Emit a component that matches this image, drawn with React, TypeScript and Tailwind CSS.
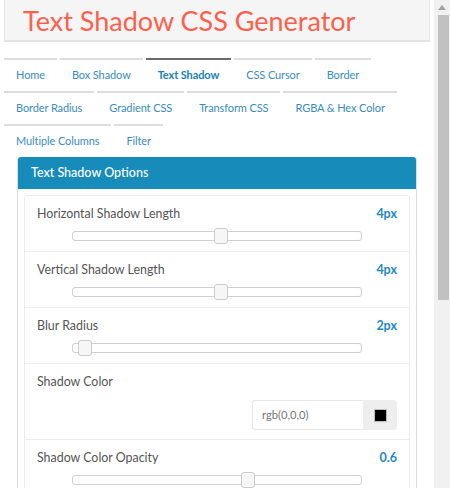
import React from "react";

const font = { fontFamily: "Lato, 'Noto Sans', sans-serif" };

type Tab = { label: string; active?: boolean };

const rows: Tab[][] = [
  [{ label: "Home" }, { label: "Box Shadow" }, { label: "Text Shadow", active: true }, { label: "CSS Cursor" }, { label: "Border" }],
  [{ label: "Border Radius" }, { label: "Gradient CSS" }, { label: "Transform CSS" }, { label: "RGBA & Hex Color" }],
  [{ label: "Multiple Columns" }, { label: "Filter" }],
];

function Slider({ left }: { left: number }) {
  return (
    <div className="mx-auto w-[290px] h-[16px] flex items-center">
      <div className="relative w-full h-[10px] rounded-[3px] border border-[#d0d0d0] bg-white">
        <div
          className="absolute top-[-4px] w-[14px] h-[16px] rounded-[3px] border border-[#cccccc] bg-[#f6f6f6]"
          style={{ left }}
        />
      </div>
    </div>
  );
}

function SliderItem({ label, value, left, first }: { label: string; value: string; left: number; first?: boolean }) {
  return (
    <div className={`px-[12px] pt-[9px] pb-[7px] ${first ? "" : "border-t border-[#ececec]"}`}>
      <div className="flex justify-between items-center h-[18px]">
        <span className="text-[12.4px] text-[#555555]">{label}</span>
        <span className="text-[12.5px] font-bold text-[#1f88c4]">{value}</span>
      </div>
      <div className="mt-[5px]">
        <Slider left={left} />
      </div>
    </div>
  );
}

export default function App() {
  return (
    <div className="w-[450px] h-[488px] flex overflow-hidden bg-white" style={font}>
      <div className="flex-1 min-w-0">
        <div className="ml-[4px] w-[426px] h-[42px] bg-[#f5f5f5] border border-[#e8e8e8] border-b-2 border-b-[#e2e2e2] border-t-0 flex items-center">
          <h1 className="ml-[18px] text-[27px] leading-none text-[#fd5f4c] tracking-[0px]">Text Shadow CSS Generator</h1>
        </div>
        <div className="mt-[16px] px-[4px]">
          {rows.map((row, i) => (
            <div key={i} className="flex gap-[3px]">
              {row.map((t) => (
                <div
                  key={t.label}
                  className={`h-[33px] px-[12px] flex items-center border-t-2 text-[11px] tracking-[-0.1px] ${
                    t.active ? "border-[#6b6b6b] font-bold text-[#1b80b6]" : "border-[#dddddd] text-[#3a8cc0]"
                  }`}
                >
                  {t.label}
                </div>
              ))}
            </div>
          ))}
        </div>
        <div className="ml-[17px] w-[400px] border border-[#dddddd] border-t-0 rounded-t-[3px]">
          <div className="h-[32px] bg-[#178bba] rounded-t-[3px] flex items-center px-[13px]">
            <span className="text-white text-[12.5px] font-medium">Text Shadow Options</span>
          </div>
          <div className="p-[6px]">
            <div className="border border-[#ececec] rounded-[3px]">
              <SliderItem label="Horizontal Shadow Length" value="4px" left={141} first />
              <SliderItem label="Vertical Shadow Length" value="4px" left={141} />
              <SliderItem label="Blur Radius" value="2px" left={5} />
              <div className="px-[12px] pt-[9px] pb-[9px] border-t border-[#ececec]">
                <div className="h-[18px] flex items-center">
                  <span className="text-[12.4px] text-[#555555]">Shadow Color</span>
                </div>
                <div className="mt-[9px] flex justify-end">
                  <div className="flex w-[145px] h-[30px]">
                    <div className="flex-1 border border-[#e6e6e6] border-r-0 rounded-l-[3px] flex items-center px-[9px] text-[11.2px] text-[#777777]">
                      rgb(0,0,0)
                    </div>
                    <div className="w-[34px] bg-[#eeeeee] rounded-r-[3px] flex items-center justify-center">
                      <div className="w-[13px] h-[13px] bg-black border border-[#bbbbbb]" />
                    </div>
                  </div>
                </div>
              </div>
              <SliderItem label="Shadow Color Opacity" value="0.6" left={168} />
            </div>
          </div>
        </div>
      </div>
      <div className="w-[16px] bg-[#f1f1f1] flex flex-col items-center">
        <div className="h-[15px] w-full flex items-center justify-center">
          <svg width="8" height="5" viewBox="0 0 8 5">
            <path d="M0 5 L4 0 L8 5 Z" fill="#a3a3a3" />
          </svg>
        </div>
        <div className="w-[11px] ml-[2px] h-[285px] bg-[#c1c1c1]" />
      </div>
    </div>
  );
}
